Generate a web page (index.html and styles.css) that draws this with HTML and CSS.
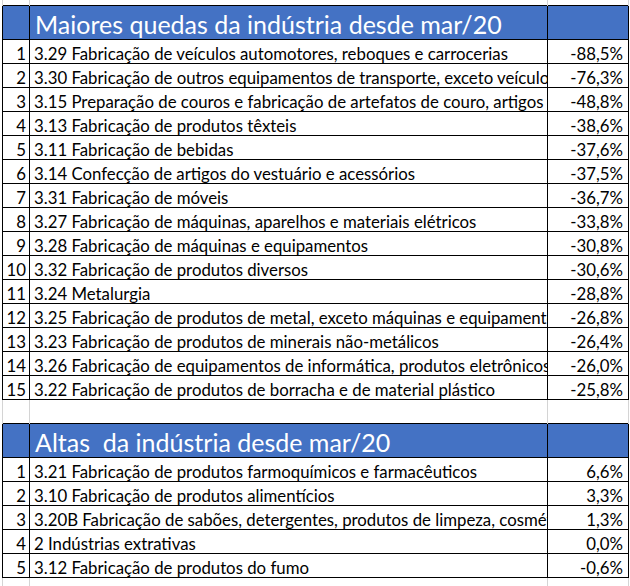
FILE: index.html
```html
<!DOCTYPE html>
<html lang="pt-BR">
<head>
<meta charset="utf-8">
<title>Indústria desde mar/20</title>
<link rel="stylesheet" href="styles.css">
</head>
<body>
<div class="sheet">
<table class="grid">
<colgroup><col class="c-num"><col class="c-name"><col class="c-val"></colgroup>
<tbody>
<tr class="blank top"><td></td><td></td><td></td></tr>
<tr class="head"><td></td><td class="title">Maiores quedas da indústria desde mar/20</td><td></td></tr>
<tr class="row"><td class="num">1</td><td class="name">3.29 Fabricação de veículos automotores, reboques e carrocerias</td><td class="val">-88,5%</td></tr>
<tr class="row"><td class="num">2</td><td class="name">3.30 Fabricação de outros equipamentos de transporte, exceto veículos automotores</td><td class="val">-76,3%</td></tr>
<tr class="row"><td class="num">3</td><td class="name">3.15 Preparação de couros e fabricação de artefatos de couro, artigos para viagem e calçados</td><td class="val">-48,8%</td></tr>
<tr class="row"><td class="num">4</td><td class="name">3.13 Fabricação de produtos têxteis</td><td class="val">-38,6%</td></tr>
<tr class="row"><td class="num">5</td><td class="name">3.11 Fabricação de bebidas</td><td class="val">-37,6%</td></tr>
<tr class="row"><td class="num">6</td><td class="name">3.14 Confecção de artigos do vestuário e acessórios</td><td class="val">-37,5%</td></tr>
<tr class="row"><td class="num">7</td><td class="name">3.31 Fabricação de móveis</td><td class="val">-36,7%</td></tr>
<tr class="row"><td class="num">8</td><td class="name">3.27 Fabricação de máquinas, aparelhos e materiais elétricos</td><td class="val">-33,8%</td></tr>
<tr class="row"><td class="num">9</td><td class="name">3.28 Fabricação de máquinas e equipamentos</td><td class="val">-30,8%</td></tr>
<tr class="row"><td class="num">10</td><td class="name">3.32 Fabricação de produtos diversos</td><td class="val">-30,6%</td></tr>
<tr class="row"><td class="num">11</td><td class="name">3.24 Metalurgia</td><td class="val">-28,8%</td></tr>
<tr class="row"><td class="num">12</td><td class="name">3.25 Fabricação de produtos de metal, exceto máquinas e equipamentos</td><td class="val">-26,8%</td></tr>
<tr class="row"><td class="num">13</td><td class="name">3.23 Fabricação de produtos de minerais não-metálicos</td><td class="val">-26,4%</td></tr>
<tr class="row"><td class="num">14</td><td class="name">3.26 Fabricação de equipamentos de informática, produtos eletrônicos e ópticos</td><td class="val">-26,0%</td></tr>
<tr class="row"><td class="num">15</td><td class="name">3.22 Fabricação de produtos de borracha e de material plástico</td><td class="val">-25,8%</td></tr>
<tr class="blank mid"><td></td><td></td><td></td></tr>
<tr class="head"><td></td><td class="title">Altas&nbsp; da indústria desde mar/20</td><td></td></tr>
<tr class="row"><td class="num">1</td><td class="name">3.21 Fabricação de produtos farmoquímicos e farmacêuticos</td><td class="val">6,6%</td></tr>
<tr class="row"><td class="num">2</td><td class="name">3.10 Fabricação de produtos alimentícios</td><td class="val">3,3%</td></tr>
<tr class="row"><td class="num">3</td><td class="name">3.20B Fabricação de sabões, detergentes, produtos de limpeza, cosméticos, produtos de perfumaria e de higiene pessoal</td><td class="val">1,3%</td></tr>
<tr class="row"><td class="num">4</td><td class="name">2 Indústrias extrativas</td><td class="val">0,0%</td></tr>
<tr class="row"><td class="num">5</td><td class="name">3.12 Fabricação de produtos do fumo</td><td class="val">-0,6%</td></tr>
<tr class="blank bottom"><td></td><td></td><td></td></tr>
</tbody>
</table>
</div>
</body>
</html>
```

FILE: styles.css
```css
html, body {
  margin: 0;
  padding: 0;
  background: #ffffff;
}

body {
  font-family: Lato, "Open Sans", "Liberation Sans", sans-serif;
  color: #000000;
  overflow: hidden;
}

.sheet {
  padding-left: 2px;
}

.grid {
  border-collapse: collapse;
  table-layout: fixed;
  width: 626px;
}

.c-num { width: 27px; }
.c-name { width: 518px; }
.c-val { width: 81px; }

.grid td {
  padding: 0;
  box-sizing: border-box;
}

.blank td {
  border-left: 1px solid #d4d4d4;
  border-right: 1px solid #d4d4d4;
}

.blank.top td { height: 5px; }
.blank.mid td { height: 24px; }
.blank.bottom td { height: 10px; }

.head td {
  height: 34px;
  background: #4472c4;
  border: 1px solid #000000;
  color: #ffffff;
  font-size: 25px;
  line-height: 30px;
  vertical-align: bottom;
  white-space: nowrap;
  overflow: hidden;
}

.head .title {
  padding-left: 5px;
}

.row td {
  height: 24px;
  border: 1px solid #000000;
  font-size: 16.8px;
  line-height: 18px;
  vertical-align: bottom;
  white-space: nowrap;
  overflow: hidden;
}

.row .num {
  text-align: right;
  padding-right: 3px;
}

.row .name {
  padding-left: 4px;
  text-overflow: clip;
}

.row .val {
  text-align: right;
  padding-right: 5px;
}
```
